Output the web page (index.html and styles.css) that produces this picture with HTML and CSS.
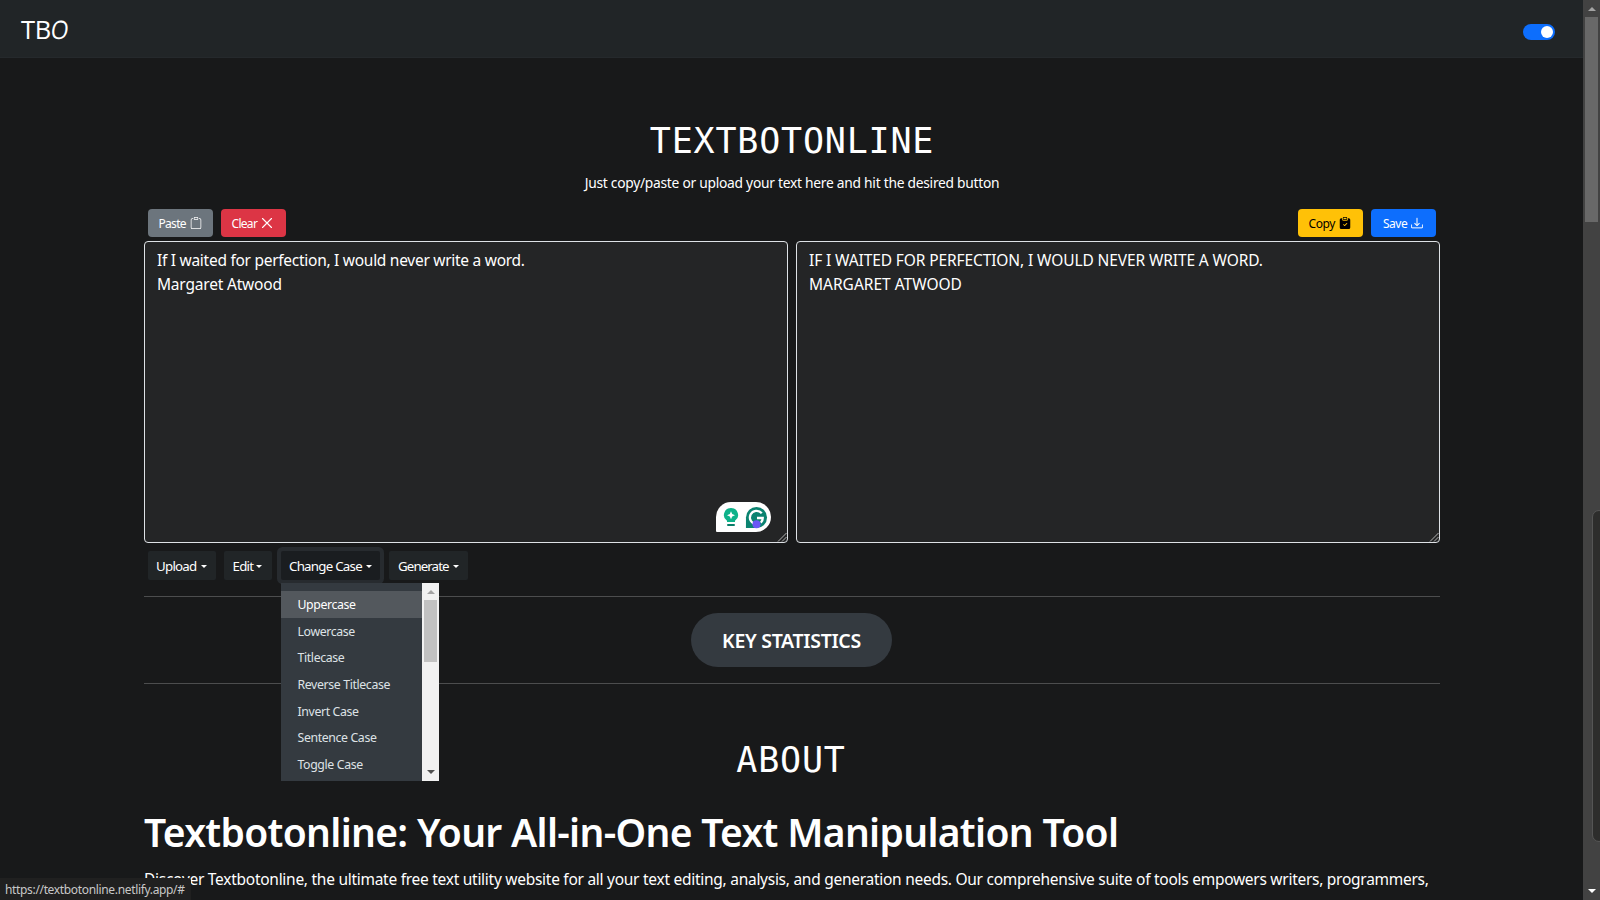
FILE: index.html
```html
<!DOCTYPE html>
<html lang="en">
<head>
<meta charset="utf-8">
<title>Textbotonline</title>
<link rel="stylesheet" href="styles.css">
</head>
<body>
<div class="page">
  <nav class="navbar">
    <a class="brand">TB<span class="brand-o">O</span></a>
    <span class="switch"><span class="switch-knob"></span></span>
  </nav>
  <main class="container">
    <h2 class="title mono">TEXTBOTONLINE</h2>
    <p class="subtitle">Just copy/paste or upload your text here and hit the desired button</p>
    <div class="actions">
      <button class="btn btn-secondary"><span>Paste</span>
        <svg viewBox="0 0 16 16" fill="currentColor"><path d="M4 1.500H3a2 2 0 0 0-2 2V14a2 2 0 0 0 2 2h10a2 2 0 0 0 2-2V3.500a2 2 0 0 0-2-2h-1v1h1a1 1 0 0 1 1 1V14a1 1 0 0 1-1 1H3a1 1 0 0 1-1-1V3.500a1 1 0 0 1 1-1h1z"/><path d="M9.500 1a.5.5 0 0 1 .5.5v1a.5.5 0 0 1-.5.5h-3a.5.5 0 0 1-.5-.5v-1a.5.5 0 0 1 .5-.5zm-3-1A1.500 1.500 0 0 0 5 1.500v1A1.500 1.500 0 0 0 6.500 4h3A1.500 1.500 0 0 0 11 2.500v-1A1.500 1.500 0 0 0 9.500 0z"/></svg></button>
      <button class="btn btn-danger"><span>Clear</span>
        <svg viewBox="0 0 16 16" fill="none" stroke="currentColor" stroke-width="1.500" stroke-linecap="round"><path d="M2 2l12 12M14 2L2 14"/></svg></button>
      <span class="spacer"></span>
      <button class="btn btn-warning"><span>Copy</span>
        <svg viewBox="0 0 16 16" fill="currentColor"><path d="M6.500 0A1.500 1.500 0 0 0 5 1.500v1A1.500 1.500 0 0 0 6.500 4h3A1.500 1.500 0 0 0 11 2.500v-1A1.500 1.500 0 0 0 9.500 0zm3 1a.5.5 0 0 1 .5.5v1a.5.5 0 0 1-.5.5h-3a.5.5 0 0 1-.5-.5v-1a.5.5 0 0 1 .5-.5z"/><path d="M4 1.500H3a2 2 0 0 0-2 2V14a2 2 0 0 0 2 2h10a2 2 0 0 0 2-2V3.500a2 2 0 0 0-2-2h-1v1A2.500 2.500 0 0 1 9.500 5h-3A2.500 2.500 0 0 1 4 2.500zm6.854 7.354-3 3a.5.5 0 0 1-.708 0l-1.500-1.500a.5.5 0 0 1 .708-.708L7.500 10.793l2.646-2.647a.5.5 0 0 1 .708.708"/></svg></button>
      <button class="btn btn-primary"><span>Save</span>
        <svg viewBox="0 0 16 16" fill="currentColor" stroke="currentColor" stroke-width=".3"><path d="M.5 9.900a.5.5 0 0 1 .5.5v2.500a1 1 0 0 0 1 1h12a1 1 0 0 0 1-1v-2.500a.5.5 0 0 1 1 0v2.500a2 2 0 0 1-2 2H2a2 2 0 0 1-2-2v-2.500a.5.5 0 0 1 .5-.5"/><path d="M7.646 11.854a.5.5 0 0 0 .708 0l3-3a.5.5 0 0 0-.708-.708L8.500 10.293V1.500a.5.5 0 0 0-1 0v8.793L5.354 8.146a.5.5 0 1 0-.708.708z"/></svg></button>
    </div>
    <div class="panes">
      <div class="pane">
        <span class="pane-line in1">If I waited for perfection, I would never write a word.</span>
        <span class="pane-line in2">Margaret Atwood</span>
        <svg class="grip" viewBox="0 0 10 10"><path d="M1 9.500L9.500 1M5 9.500L9.500 5"/></svg>
        <div class="helper">
          <svg class="bulb" viewBox="0 0 16 20"><path d="M8 1a7 7 0 0 0-4 12.800V15h8v-1.200A7 7 0 0 0 8 1z" fill="#0eb28a"/><path d="M8 4.200L9.200 7 12 8.200 9.200 9.400 8 12.200 6.800 9.400 4 8.200 6.800 7z" fill="#fff"/><path d="M5 18h6" stroke="#087d68" stroke-width="2" stroke-linecap="round"/></svg>
          <svg class="gram" viewBox="0 0 24 24"><path d="M1 23V12a11 11 0 1 1 11 11z" fill="#0b8370"/><path d="M17.500 7.500A7 7 0 1 0 12 19M12.500 12.500H18.500Q18.500 15.500 16.500 17.500" fill="none" stroke="#fff" stroke-width="2.400"/><circle cx="12" cy="19" r="4.200" fill="#6b57f5"/></svg>
        </div>
      </div>
      <div class="pane">
        <span class="pane-line out1">IF I WAITED FOR PERFECTION, I WOULD NEVER WRITE A WORD.</span>
        <span class="pane-line">MARGARET ATWOOD</span>
        <svg class="grip" viewBox="0 0 10 10"><path d="M1 9.500L9.500 1M5 9.500L9.500 5"/></svg>
      </div>
    </div>
    <div class="menus">
      <button class="drop upload"><span>Upload</span></button>
      <button class="drop edit"><span>Edit</span></button>
      <div class="drop-wrap">
        <button class="drop change open"><span>Change Case</span></button>
        <div class="menu">
          <ul class="menu-list">
            <li class="active">Uppercase</li>
            <li>Lowercase</li>
            <li>Titlecase</li>
            <li>Reverse Titlecase</li>
            <li>Invert Case</li>
            <li>Sentence Case</li>
            <li>Toggle Case</li>
          </ul>
          <div class="menu-scroll"><i class="up"></i><b></b><i class="down"></i></div>
        </div>
      </div>
      <button class="drop generate"><span>Generate</span></button>
    </div>
    <hr>
    <div class="stats"><button class="stats-btn">KEY STATISTICS</button></div>
    <hr>
    <h2 class="about mono">ABOUT</h2>
    <h1 class="headline">Textbotonline: Your All-in-One Text Manipulation Tool</h1>
    <p class="intro">Discover Textbotonline, the ultimate free text utility website for all your text editing, analysis, and generation needs. Our comprehensive suite of tools empowers writers, programmers,</p>
  </main>
  <div class="status">https://textbotonline.netlify.app/#</div>
</div>
<div class="scrollbar"><i class="up"></i><b></b><i class="down"></i></div>
<div class="side-tab"></div>
</body>
</html>
```
FILE: styles.css
```css
* { box-sizing: border-box; }
body {
  margin: 0; width: 1600px; height: 900px; overflow: hidden; display: flex;
  background: #18191a; color: #fff; font: 15.5px/24px "Noto Sans", sans-serif;
}
h1, h2, p { margin: 0; font-weight: 400; }
button { font-family: inherit; color: inherit; border: 0; padding: 0; white-space: nowrap; }
.page { flex: 1; height: 900px; overflow: hidden; position: relative; min-width: 0; }
.navbar {
  height: 58px; background: #212527; border-bottom: 1px solid #25292c;
  display: flex; align-items: center; justify-content: space-between; padding: 5px 28px 0 21px;
}
.brand { font: 500 25.5px/40px "Open Sans", sans-serif; padding-bottom: 4px; letter-spacing: -.3px; }
.brand-o { display: inline-block; transform: scaleX(.9) skewX(-8deg); transform-origin: left; }
.switch { width: 32px; height: 16px; border-radius: 8px; background: #0d6efd; display: flex; justify-content: flex-end; padding: 2px; margin-top: 1px; }
.switch-knob { width: 12px; height: 12px; border-radius: 50%; background: #fff; }
.container { width: 1296px; margin: 0 auto 0 144px; }
.mono { font-family: "DejaVu Sans Mono", monospace; font-size: 35px; line-height: 48px; text-align: center; letter-spacing: .8px; }
.title { margin-top: 59px; }
.subtitle { font-size: 13.8px; line-height: 22px; text-align: center; margin-top: 7px; letter-spacing: -.264px; }
.actions { display: flex; gap: 8px; padding: 0 4px; margin-top: 15px; height: 28px; }
.spacer { flex: 1; }
.btn { width: 65px; height: 28px; border-radius: 4px; display: flex; align-items: center; gap: 4px; padding: 1px 0 0 10.5px; font-size: 12px; line-height: 18px; letter-spacing: -.7px; }
.btn svg { width: 12px; height: 12px; flex: none; margin-top: -1px; }
.btn-secondary { background: #6c757d; }
.btn-danger { background: #dc3545; }
.btn-warning { background: #ffc107; color: #000; letter-spacing: -.4px; }
.btn-primary { background: #0d6efd; letter-spacing: -.5px; padding-left: 12px; }
.panes { display: flex; gap: 8px; margin-top: 4px; }
.pane { position: relative; flex: 1; height: 302px; border: 1px solid #dee2e6; border-radius: 4px; background: #242526; padding: 6px 12px; }
.pane-line { display: block; width: max-content; white-space: nowrap; }
.in1 { letter-spacing: -.274px; }
.in2 { letter-spacing: -.19px; }
.out1 { letter-spacing: -.108px; }
.grip { position: absolute; right: 0; bottom: 0; width: 10px; height: 10px; fill: none; stroke: #c4c4c4; stroke-width: .9; }
.helper { position: absolute; left: 571px; top: 260px; width: 55px; height: 30px; background: #fff; border-radius: 15px 15px 15px 1px; display: flex; align-items: center; gap: 6px; padding-left: 7px; }
.bulb { width: 16px; height: 20px; }
.gram { width: 23px; height: 23px; }
.menus { display: flex; margin-top: 8px; height: 29px; padding-left: 4px; }
.drop { height: 29px; background: #212527; font-size: 13.3px; line-height: 21px; display: flex; align-items: center; border-radius: 2px; padding: 2px 0 0 8px; letter-spacing: -.75px; }
.drop::after { content: ""; border: 3px solid transparent; border-top-color: #fff; border-bottom: 0; margin-left: 4px; margin-top: -1px; }
.upload { width: 68px; margin-right: 8px; }
.edit { width: 48px; margin-right: 9px; padding-left: 8.5px; }
.edit::after { margin-left: 3px; }
.change { width: 99px; margin-right: 9px; }
.generate { width: 79px; padding-left: 9px; letter-spacing: -.9px; }
.open { background: #1a1d20; box-shadow: 0 0 0 4px #272b2f; }
.drop-wrap { position: relative; }
.menu { position: absolute; z-index: 2; left: 0; top: 32px; width: 158px; height: 198px; display: flex; background: #343a40; }
.menu-list { list-style: none; margin: 0; padding: 8px 0 0; flex: 1; overflow: hidden; font-size: 12.3px; color: #dee2e6; letter-spacing: -.37px; }
.menu-list li { height: 26.700px; line-height: 27px; padding-left: 16.500px; white-space: nowrap; }
.menu-list .active { background: #53585d; color: #fff; }
.menu-scroll { width: 17px; background: #f1f1f1; display: flex; flex-direction: column; align-items: center; padding: 7px 0; }
.menu-scroll b { width: 13px; height: 62px; background: #c1c1c1; margin-top: 6px; }
.up { border: 4px solid transparent; border-top: 0; border-bottom-color: #a3a3a3; }
.down { border: 4px solid transparent; border-bottom: 0; border-top-color: #505050; margin-top: auto; }
hr { margin: 16px 0; border: 0; height: 1px; background: #4c4d4e; }
.stats { display: flex; justify-content: center; height: 54px; padding-right: 1px; }
.stats-btn { width: 201px; border-radius: 27px; background: #343a40; font-size: 19.5px; font-weight: 600; letter-spacing: -.3px; }
.about { margin-top: 52px; padding-right: 2px; }
.headline { font-size: 39px; font-weight: 600; line-height: 48px; margin-top: 24px; white-space: nowrap; letter-spacing: -.68px; }
.intro { margin-top: 11px; white-space: nowrap; letter-spacing: -.271px; }
.status { position: absolute; left: 0; bottom: 0; width: 191px; height: 22px; padding-left: 5px; background: #202020; color: #c8c8c8; font-size: 12px; line-height: 24px; border-radius: 0 3px 0 0; white-space: nowrap; letter-spacing: -.34px; }
.scrollbar { width: 17px; background: #424242; display: flex; flex-direction: column; align-items: center; padding: 7px 0; }
.scrollbar b { width: 13px; height: 205px; background: #686868; margin-top: 6px; }
.scrollbar .down { border-top-color: #fff; }
.side-tab { position: absolute; left: 1592px; top: 510px; width: 14px; height: 332px; background: #2d2d2c; border: 1px solid #555; border-radius: 8px; }
```
